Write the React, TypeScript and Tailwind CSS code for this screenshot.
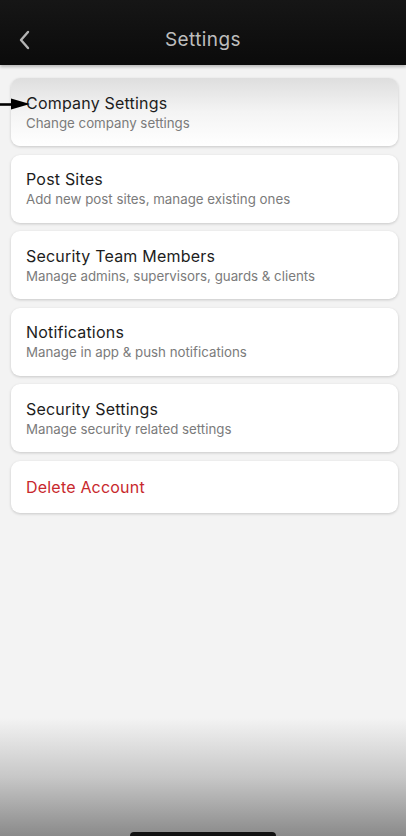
const items = [
  { title: "Company Settings", desc: "Change company settings", active: true },
  { title: "Post Sites", desc: "Add new post sites, manage existing ones" },
  { title: "Security Team Members", desc: "Manage admins, supervisors, guards & clients" },
  { title: "Notifications", desc: "Manage in app & push notifications" },
  { title: "Security Settings", desc: "Manage security related settings" },
];

export default function App() {
  return (
    <div className="relative h-[836px] w-full overflow-hidden bg-[#f3f3f3] font-['Inter',sans-serif]">
      <header className="flex h-[65px] items-center bg-gradient-to-b from-[#161616] to-[#0b0b0b] px-[18px] shadow-[0_2px_3px_rgba(0,0,0,0.25)]">
        <svg width="14" height="22" viewBox="0 0 14 22" fill="none" className="mt-[14px]">
          <path d="M10 3 3 11l7 8" stroke="#b4b4b4" strokeWidth="2.4" strokeLinecap="round" strokeLinejoin="round" />
        </svg>
        <h1 className="mt-[15px] flex-1 pr-[14px] text-center text-[19px] tracking-[0.4px] text-[#bdbdbd]">
          Settings
        </h1>
      </header>

      <div className="flex flex-col gap-[8.5px] pl-[11px] pr-[8px] pt-[13px]">
        {items.map((it) => (
          <div
            key={it.title}
            className={`flex h-[68px] flex-col justify-center rounded-[9px] px-[15px] shadow-[0_1px_3px_rgba(0,0,0,0.18)] ${
              it.active ? "bg-gradient-to-b from-[#dedede] via-[#f4f4f4] to-white" : "bg-white"
            }`}
          >
            <div className="text-[16px] leading-[21px] tracking-[0.2px] text-[#1d1d1d]">{it.title}</div>
            <div className="text-[13.3px] leading-[18px] text-[#7b7b7b]">{it.desc}</div>
          </div>
        ))}
        <div className="flex h-[52px] items-center rounded-[9px] bg-white px-[15px] shadow-[0_1px_3px_rgba(0,0,0,0.18)]">
          <span className="text-[16px] tracking-[0.2px] text-[#c8282d]">Delete Account</span>
        </div>
      </div>

      <svg className="absolute left-0 top-[97px]" width="32" height="14" viewBox="0 0 32 14">
        <path d="M0 7.5h14" stroke="#000" strokeWidth="2.6" />
        <path d="M11 1.5 30 7 11 12.5z" fill="#000" />
      </svg>

      <div className="pointer-events-none absolute inset-x-0 bottom-0 flex h-[118px] items-end justify-center bg-gradient-to-b from-[rgba(243,243,243,0)] via-[rgba(170,170,170,0.6)] to-[#8a8a8a]">
        <div className="h-[4px] w-[146px] rounded-t-full bg-[#111]" />
      </div>
    </div>
  );
}
